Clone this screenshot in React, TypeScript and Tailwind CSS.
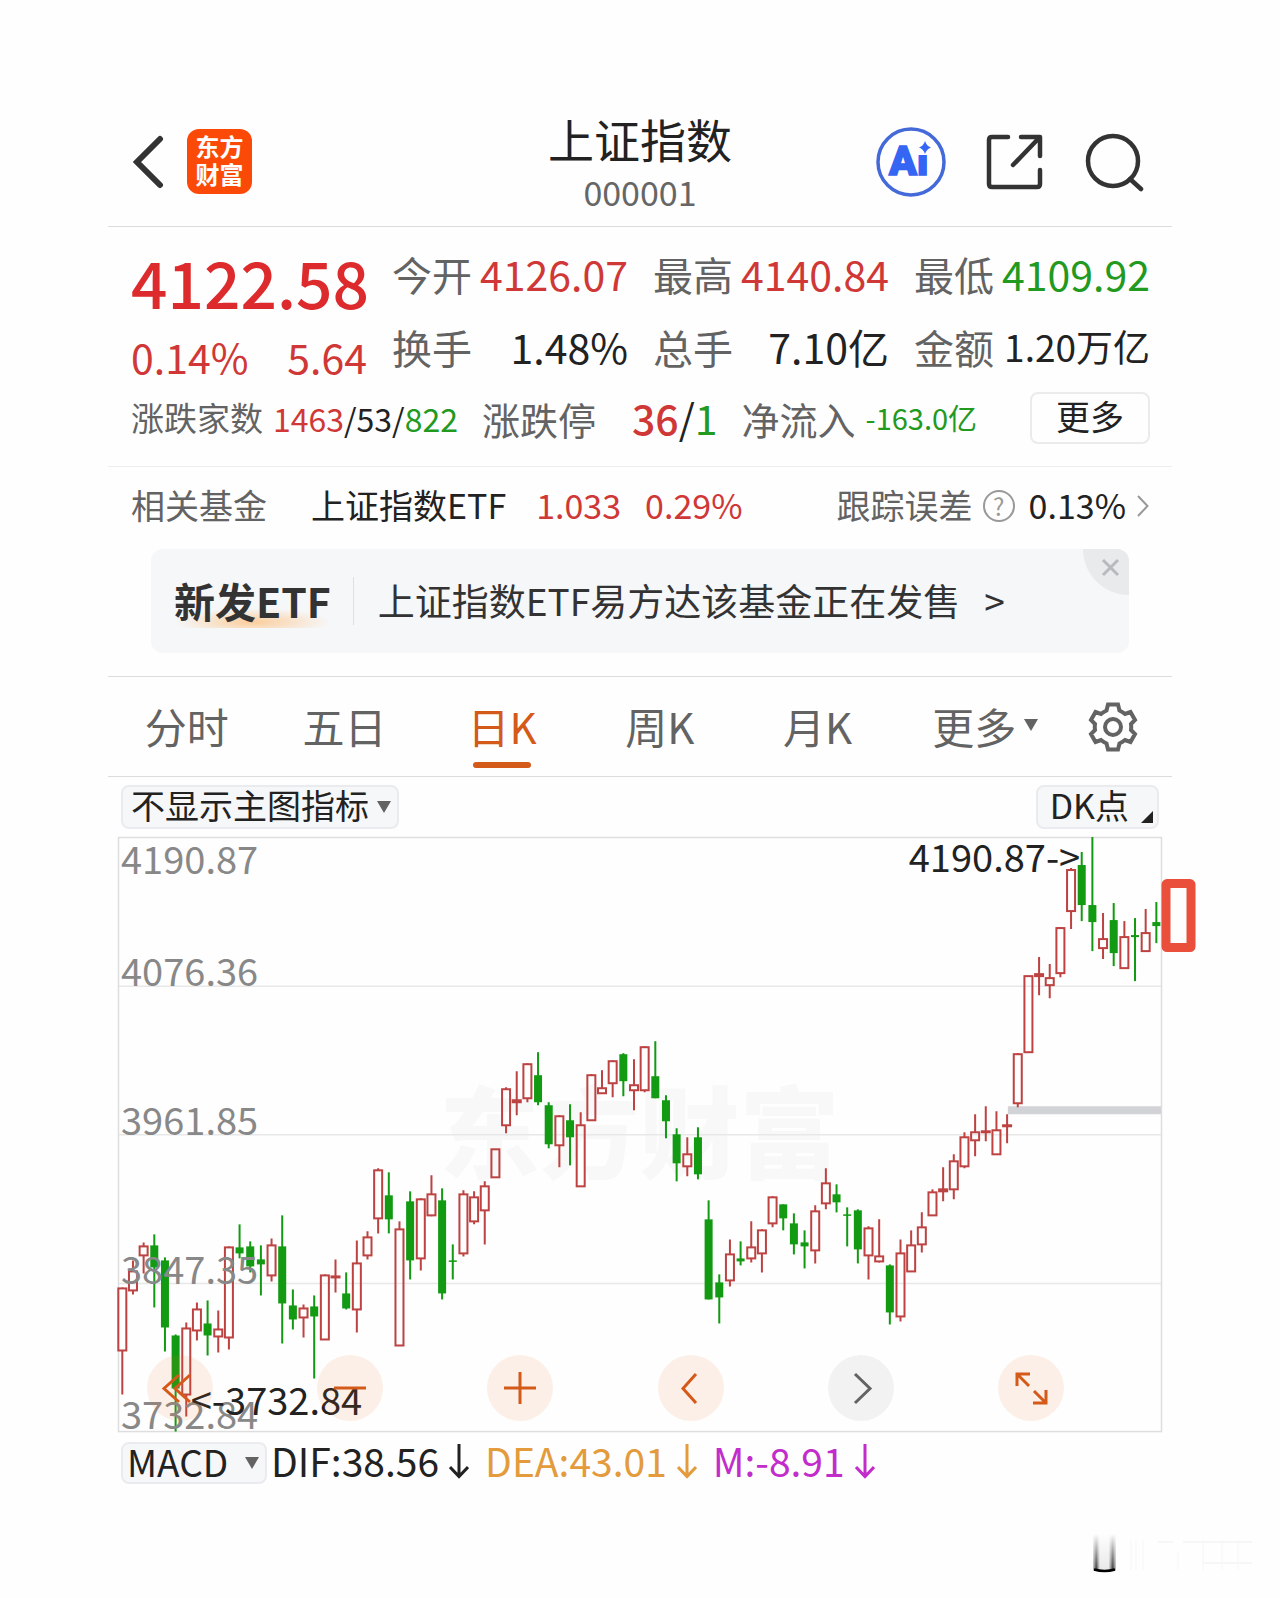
import { useState } from "react";
import { clsx } from "clsx";

type Candle = [kind: "r" | "g", high: number, top: number, bottom: number, low: number];

// high / body top / body bottom / low, in chart units from the top edge
const CANDLES: Candle[] = [
  ["r", 450, 451, 513, 557], ["r", 423, 434, 453, 457], ["r", 405, 409, 418, 436], ["g", 397, 408, 430, 470],
  ["g", 420, 423, 490, 514], ["g", 497, 498, 551, 594], ["r", 485, 491, 557, 579], ["r", 465, 472, 493, 503],
  ["g", 463, 486, 498, 518], ["r", 473, 492, 499, 515], ["r", 409, 410, 500, 512], ["g", 387, 410, 416, 421],
  ["g", 404, 409, 429, 435], ["g", 408, 422, 427, 458], ["r", 401, 408, 438, 444], ["g", 378, 409, 466, 506],
  ["g", 452, 468, 482, 492], ["r", 467, 471, 480, 500], ["g", 458, 469, 479, 541], ["r", 437, 438, 502, 502],
  ["r", 422, 439, 440, 455], ["g", 435, 456, 471, 472], ["r", 403, 426, 472, 495], ["r", 394, 400, 418, 422],
  ["r", 331, 333, 381, 396], ["g", 335, 358, 382, 396], ["r", 384, 392, 508, 508], ["g", 354, 364, 423, 442],
  ["r", 361, 362, 421, 433], ["r", 338, 357, 378, 379], ["g", 351, 363, 456, 462], ["g", 407, 423, 424, 442],
  ["r", 353, 357, 416, 419], ["r", 354, 360, 384, 387], ["r", 344, 349, 373, 407], ["r", 312, 312, 340, 340],
  ["r", 250, 252, 288, 296], ["r", 234, 263, 265, 278], ["r", 226, 227, 261, 265], ["g", 215, 238, 265, 268],
  ["g", 265, 268, 307, 311], ["r", 278, 279, 308, 330], ["g", 267, 283, 300, 328], ["r", 275, 288, 349, 349],
  ["r", 237, 238, 283, 283], ["r", 233, 251, 256, 256], ["r", 223, 224, 246, 260], ["g", 216, 217, 244, 259],
  ["r", 222, 248, 253, 273], ["r", 209, 210, 253, 255], ["g", 204, 239, 261, 261], ["g", 258, 263, 284, 301],
  ["g", 291, 297, 326, 344], ["r", 300, 317, 329, 339], ["g", 290, 300, 337, 342], ["g", 363, 382, 462, 462],
  ["g", 437, 445, 460, 486], ["r", 402, 417, 443, 449], ["g", 404, 421, 424, 428], ["r", 384, 410, 421, 425],
  ["r", 392, 393, 416, 435], ["r", 359, 360, 386, 390], ["g", 367, 367, 381, 393], ["g", 376, 386, 407, 417],
  ["g", 393, 405, 409, 431], ["r", 368, 374, 413, 426], ["r", 331, 346, 366, 372], ["g", 347, 357, 365, 375],
  ["g", 370, 377, 378, 409], ["g", 372, 373, 412, 426], ["r", 389, 391, 418, 442], ["r", 382, 419, 424, 425],
  ["g", 427, 428, 475, 487], ["r", 402, 416, 479, 484], ["r", 393, 408, 434, 434], ["r", 375, 390, 407, 415],
  ["r", 352, 355, 378, 378], ["r", 330, 352, 354, 364], ["r", 317, 324, 352, 362], ["r", 295, 300, 329, 331],
  ["r", 277, 295, 303, 319], ["r", 269, 294, 295, 304], ["r", 274, 293, 317, 317], ["r", 277, 288, 289, 306],
  ["r", 216, 217, 266, 270], ["r", 139, 139, 215, 215], ["r", 120, 137, 139, 158], ["r", 127, 141, 148, 161],
  ["r", 90, 91, 136, 140], ["r", 31, 33, 74, 92], ["g", 15, 28, 68, 84], ["g", 0, 68, 85, 114],
  ["r", 76, 102, 111, 122], ["g", 66, 83, 116, 129], ["r", 84, 100, 131, 131], ["g", 81, 98, 100, 144],
  ["r", 72, 96, 114, 115], ["g", 65, 85, 89, 106],
];

const PRICE_LABELS = [
  { y: 37, text: "4190.87" },
  { y: 149, text: "4076.36" },
  { y: 298, text: "3961.85" },
  { y: 447, text: "3847.35" },
  { y: 591, text: "3732.84" },
];

const QUOTES = [
  { label: "今开", value: "4126.07", color: "text-[#cf3836]" },
  { label: "最高", value: "4140.84", color: "text-[#cf3836]" },
  { label: "最低", value: "4109.92", color: "text-[#22991f]" },
  { label: "换手", value: "1.48%", color: "text-[#222222]" },
  { label: "总手", value: "7.10亿", color: "text-[#222222]" },
  { label: "金额", value: "1.20万亿", color: "text-[#222222]", small: true },
];

const TABS = ["分时", "五日", "日K", "周K", "月K", "更多"];

const MACD = [
  { text: "DIF:38.56", color: "text-[#222222]" },
  { text: "DEA:43.01", color: "text-[#e39b3c]" },
  { text: "M:-8.91", color: "text-[#c22ccb]" },
];

const CONTROLS = [
  { label: "最左", d: "M32 20 17 33.5 32 47M43 20 28 33.5 43 47" },
  { label: "缩小", d: "M17 33h32" },
  { label: "放大", d: "M17 33h32M33 17v32" },
  { label: "左移", d: "M38 19 25 33.5 38 48" },
  { label: "右移", d: "M27 19 42 33.5 27 48", muted: true },
  { label: "全屏", d: "M19 31V19h13M19 19l12 12M36 36l12 12M48 35v13H35" },
];

function Header() {
  return (
    <header className="grid h-[130px] grid-cols-[1fr_auto_1fr] items-center border-b border-[#dcdcdc] px-6">
      <div className="flex items-center gap-[23px]">
        <button aria-label="返回">
          <svg width="32" height="54" viewBox="0 0 32 54" fill="none" stroke="#333" strokeWidth="6" strokeLinecap="round">
            <path d="M28 4 5 27 28 50" />
          </svg>
        </button>
        <div className="flex size-[65px] flex-col items-center justify-center rounded-xl bg-[#fb4a08] pb-1 text-2xl leading-7 font-bold text-white">
          <span>东方</span>
          <span>财富</span>
        </div>
      </div>
      <div className="pt-1 text-center">
        <h1 className="text-[46px] leading-[56px] text-[#222222]">上证指数</h1>
        <p className="text-[34px] leading-[52px] text-[#666666]">000001</p>
      </div>
      <div className="flex items-center justify-end gap-10 pr-1">
        <button aria-label="Ai">
          <svg width="70" height="70" viewBox="0 0 70 70">
            <circle cx="35" cy="35" r="33" fill="none" stroke="#4469d8" strokeWidth="3.5" />
            <text x="13" y="48" fill="#3565f3" fontFamily="Roboto" fontWeight="900" fontSize="41" stroke="#3565f3" strokeWidth="1.5">Ai</text>
            <path fill="#fefefe" d="M42 14h14v14H42z" />
            <path fill="#3565f3" d="M49 14q1.500 5 6 6.500-4.500 1.500-6 6.500-1.500-5-6-6.500 4.500-1.500 6-6.500z" />
          </svg>
        </button>
        <button aria-label="分享">
          <svg width="58" height="58" viewBox="0 0 58 58" fill="none" stroke="#333" strokeWidth="4.5" strokeLinecap="round" strokeLinejoin="round">
            <path d="M22 4H6q-3 0-3 3v44q0 3 3 3h45q3 0 3-3V37M35 4h19v19M53 5 27 32" />
          </svg>
        </button>
        <button aria-label="搜索">
          <svg width="60" height="60" viewBox="0 0 60 60" fill="none" stroke="#333" strokeWidth="4.5" strokeLinecap="round">
            <circle cx="29" cy="29" r="25" />
            <path d="m46 47 11 10" />
          </svg>
        </button>
      </div>
    </header>
  );
}

function Quote() {
  return (
    <section className="border-b border-[#eeeeee] pt-[10px] pr-[22px] pb-[17px] pl-[23px]">
      <div className="grid grid-cols-4 gap-[25px]">
        <div className="text-[#cf3836]">
          <div className="text-[64px] leading-[88px] font-medium text-[#dd2a2c]">4122.58</div>
          <div className="flex justify-between text-[41px] leading-[62px]">
            <span>0.14%</span>
            <span>5.64</span>
          </div>
        </div>
        <dl className="col-span-3 grid grid-cols-3 content-start gap-x-[25px]">
          {QUOTES.map((q) => (
            <div key={q.label} className="flex h-[73px] items-center justify-between whitespace-nowrap">
              <dt className="text-[40px] text-[#636363]">{q.label}</dt>
              <dd className={clsx(q.color, q.small ? "text-[37px]" : "text-[41px]")}>{q.value}</dd>
            </div>
          ))}
        </dl>
      </div>
      <div className="flex h-[62px] items-center gap-6 whitespace-nowrap">
        <div className="flex items-center gap-[10px]">
          <span className="text-[33px] text-[#636363]">涨跌家数</span>
          <span className="text-[32px] text-[#222222]">
            <span className="text-[#cf3836]">1463</span>/53/<span className="text-[#22991f]">822</span>
          </span>
        </div>
        <div className="flex items-center gap-9">
          <span className="text-[38px] text-[#636363]">涨跌停</span>
          <span className="text-[41px] text-[#222222]">
            <span className="font-medium text-[#cf3836]">36</span>/<span className="text-[#22991f]">1</span>
          </span>
        </div>
        <div className="flex items-center gap-[10px]">
          <span className="text-[38px] text-[#636363]">净流入</span>
          <span className="text-[29px] text-[#22991f]">-163.0亿</span>
        </div>
        <button className="ml-auto h-[52px] rounded-lg border-2 border-[#ebebeb] px-6 pb-1 text-[34px] leading-[44px] text-[#222222]">更多</button>
      </div>
    </section>
  );
}

function Fund() {
  return (
    <section className="border-b border-[#dcdcdc] pb-[23px]">
      <div className="flex h-[82px] items-center justify-between pr-[22px] pb-2 pl-[23px] text-[34px] whitespace-nowrap">
        <div className="flex items-center gap-6">
          <span className="mr-5 text-[#636363]">相关基金</span>
          <a href="#fund" className="mr-[6px] text-[#222222]">上证指数ETF</a>
          <span className="text-[#cf3836]">1.033</span>
          <span className="text-[#cf3836]">0.29%</span>
        </div>
        <div className="flex items-center gap-[10px]">
          <span className="text-[#636363]">跟踪误差</span>
          <span className="mt-1 mr-1 flex size-8 items-center justify-center rounded-full border-2 border-[#999999] text-2xl leading-none text-[#999999]">?</span>
          <span className="text-[#222222]">0.13%</span>
          <svg width="14" height="24" viewBox="0 0 14 24" fill="none" stroke="#999" strokeWidth="2" className="mt-1">
            <path d="M2 2 11.500 12 2 22" />
          </svg>
        </div>
      </div>
      <div className="relative mx-[43px] flex h-[104px] items-center overflow-hidden rounded-xl bg-[#f6f7f9] pl-[23px] whitespace-nowrap">
        <div className="relative">
          <div className="absolute inset-x-0 bottom-1 h-5 bg-radial-[at_50%_70%] from-[#fbcd9b] to-transparent to-70%" />
          <strong className="relative text-[41px] font-bold text-[#333333]">新发ETF</strong>
        </div>
        <div className="mr-6 ml-[22px] h-12 w-px bg-[#dddfe2]" />
        <a href="#etf" className="flex gap-6 text-[37px] text-[#333333]">
          <span>上证指数ETF易方达该基金正在发售</span>
          <span>&gt;</span>
        </a>
        <button aria-label="关闭" className="absolute top-0 right-0 size-[46px] rounded-bl-full bg-[#e9eaec]">
          <svg width="46" height="46" viewBox="0 0 46 46" stroke="#b9babd" strokeWidth="3">
            <path d="m20 11 15 15M35 11 20 26" />
          </svg>
        </button>
      </div>
    </section>
  );
}

function Tabs() {
  const [active, setActive] = useState("日K");
  return (
    <nav className="grid h-[100px] grid-cols-[repeat(6,1fr)_118px] border-b border-[#dcdcdc] text-[42px] text-[#636363]">
      {TABS.map((tab) => (
        <button
          key={tab}
          onClick={() => setActive(tab)}
          className={clsx(
            "relative flex items-center justify-center gap-2 pb-[3px] whitespace-nowrap",
            tab === active && "text-[#d45a1a]",
            tab === "更多" && "pl-5",
          )}
        >
          {tab}
          {tab === "更多" && <Triangle />}
          {tab === active && <span className="absolute bottom-2 h-[6px] w-[58px] rounded-full bg-[#d45a1a]" />}
        </button>
      ))}
      <button aria-label="设置" className="flex items-center justify-center">
        <svg width="52" height="52" viewBox="-26 -26 52 52" fill="none" stroke="#636363" strokeWidth="4">
          <path d="M-5 -22.500H5L6.500 -16.500Q9.500 -15 12 -13L17.500 -15 22 -7 18 -3Q18.500 0 18 3L22 7 17.500 15 12 13Q9.500 15 6.500 16.500L5 22.500H-5L-6.500 16.500Q-9.500 15 -12 13L-17.500 15 -22 7 -18 3Q-18.500 0 -18 -3L-22 -7 -17.500 -15 -12 -13Q-9.500 -15 -6.500 -16.500Z" />
          <circle r="8" />
        </svg>
      </button>
    </nav>
  );
}

function Triangle() {
  return (
    <svg width="14" height="12" viewBox="0 0 14 12" fill="#636363">
      <path d="M0 0h14L7 12z" />
    </svg>
  );
}

function Chart() {
  return (
    <div className="relative">
      <svg viewBox="0 0 1043 594" className="block h-auto w-full overflow-visible">
        <text x="521" y="334" textAnchor="middle" fontSize="100" fontWeight="900" fill="#f8f8f8">东方财富</text>
        <path d="M0 149h1043M0 297.500h1043M0 446h1043" stroke="#e8e8e8" strokeWidth="1.5" />
        <rect x="0.5" y="0.5" width="1042" height="593.5" fill="none" stroke="#dedede" strokeWidth="1.5" />
        <path d="M889 273h153" stroke="#d2d3d7" strokeWidth="8" />
        {CANDLES.map(([kind, high, top, bottom, low], i) => {
          const x = 4.3 + i * 10.65;
          return kind === "g" ? (
            <g key={i} fill="#129a12">
              <rect x={x - 1} y={high} width="2" height={low - high} />
              <rect x={x - 4} y={top} width="8" height={Math.max(bottom - top, 1.5)} />
            </g>
          ) : (
            <g key={i} stroke="#bd4242" strokeWidth="2" fill="none">
              <path d={`M${x} ${high}V${top}M${x} ${bottom}V${low}`} />
              <rect x={x - 4} y={top} width="8" height={bottom - top} />
            </g>
          );
        })}
        <g fontSize="38" fill="#888888">
          {PRICE_LABELS.map((p) => (
            <text key={p.text} x="3" y={p.y}>{p.text}</text>
          ))}
        </g>
        <g fontSize="38" fill="#222222">
          <text x="790" y="35">4190.87-&gt;</text>
          <text x="244" y="577" textAnchor="end">&lt;-3732.84</text>
        </g>
        <rect x="1047" y="46.5" width="25" height="64" rx="1" fill="none" stroke="#e94f3b" strokeWidth="9" strokeLinejoin="round" />
      </svg>
      <div className="absolute inset-x-0 bottom-[11px] flex justify-between pr-[98px] pl-[29px]">
        {CONTROLS.map((c) => (
          <button
            key={c.label}
            aria-label={c.label}
            className={clsx("size-[66px] rounded-full", c.muted ? "bg-[#f2f2f2] text-[#636363]" : "bg-[#f06a1e]/10 text-[#d45a1a]")}
          >
            <svg viewBox="0 0 66 66" fill="none" stroke="currentColor" strokeWidth="3">
              <path d={c.d} />
            </svg>
          </button>
        ))}
      </div>
    </div>
  );
}

export default function App() {
  return (
    <div className="min-h-screen bg-[#fefefe] font-['Noto_Sans_CJK_SC',sans-serif]">
      <main className="px-[108px] pt-[97px]">
        <Header />
        <Quote />
        <Fund />
        <Tabs />
        <section className="px-[10px] pt-2">
          <div className="mb-2 flex h-11 justify-between px-[3px] text-[34px] text-[#222222]">
            <div className="relative flex">
              <select aria-label="主图指标" className="h-11 appearance-none rounded-lg border-2 border-[#e9ebee] bg-[#f6f7f9] pr-7 pb-1 pl-2 leading-9">
                <option>不显示主图指标</option>
              </select>
              <span className="pointer-events-none absolute inset-y-0 right-2 flex items-center"><Triangle /></span>
            </div>
            <button className="relative h-11 rounded-lg border-2 border-[#e9ebee] bg-[#f6f7f9] pr-7 pb-1 pl-3 leading-9">
              DK点
              <svg width="12" height="12" viewBox="0 0 12 12" fill="#222" className="absolute right-1 bottom-1">
                <path d="M12 0v12H0z" />
              </svg>
            </button>
          </div>
          <Chart />
          <div className="mt-[10px] flex h-[42px] items-center gap-1 px-[3px]">
            <div className="relative flex">
              <select aria-label="副图指标" className="h-[42px] appearance-none rounded-lg border-2 border-[#e9ebee] bg-[#f6f7f9] pr-9 pb-1 pl-1 text-[37px] leading-8 text-[#222222]">
                <option>MACD</option>
              </select>
              <span className="pointer-events-none absolute inset-y-0 right-2 flex items-center"><Triangle /></span>
            </div>
            {MACD.map((m) => (
              <span key={m.text} className={clsx("mr-3 flex items-center gap-[10px] pb-1 text-[39px] leading-none", m.color)}>
                {m.text}
                <svg width="20" height="36" viewBox="0 0 20 36" fill="none" stroke="currentColor" strokeWidth="3">
                  <path d="M10 1v32M1 24l9 9.500 9-9.500" />
                </svg>
              </span>
            ))}
          </div>
        </section>
      </main>
      <footer className="mt-[50px] flex justify-end pr-[27px]">
        <svg width="160" height="40" viewBox="0 0 160 40">
          <defs>
            <linearGradient id="side" x1="0" x2="1" y1="0" y2="0">
              <stop offset="0" stopColor="#444" stopOpacity="0.3" />
              <stop offset="0.14" stopColor="#333" />
              <stop offset="0.3" stopColor="#e8e8e8" />
              <stop offset="0.68" stopColor="#e8e8e8" />
              <stop offset="0.86" stopColor="#333" />
              <stop offset="1" stopColor="#444" stopOpacity="0.3" />
            </linearGradient>
            <linearGradient id="fade" x1="0" x2="0" y1="0" y2="1">
              <stop offset="0" stopColor="#fefefe" />
              <stop offset="1" stopColor="#fefefe" stopOpacity="0" />
            </linearGradient>
          </defs>
          <path d="M0 0h23v36H0z" fill="url(#side)" />
          <path d="M0 0h23v37H0z" fill="url(#fade)" />
          <path d="M1 35.500q10.500 3 21 0" fill="none" stroke="#000" strokeWidth="2.5" />
          <path d="M38 6v30M43 6v30M50 6v30M85 18v18M110 6v30M129 6v30M145 6v30" stroke="#fafafa" strokeWidth="2" />
          <path d="M65 8h15M90 8h69M110 29h49" stroke="#f6f6f6" strokeWidth="2" />
        </svg>
      </footer>
    </div>
  );
}
